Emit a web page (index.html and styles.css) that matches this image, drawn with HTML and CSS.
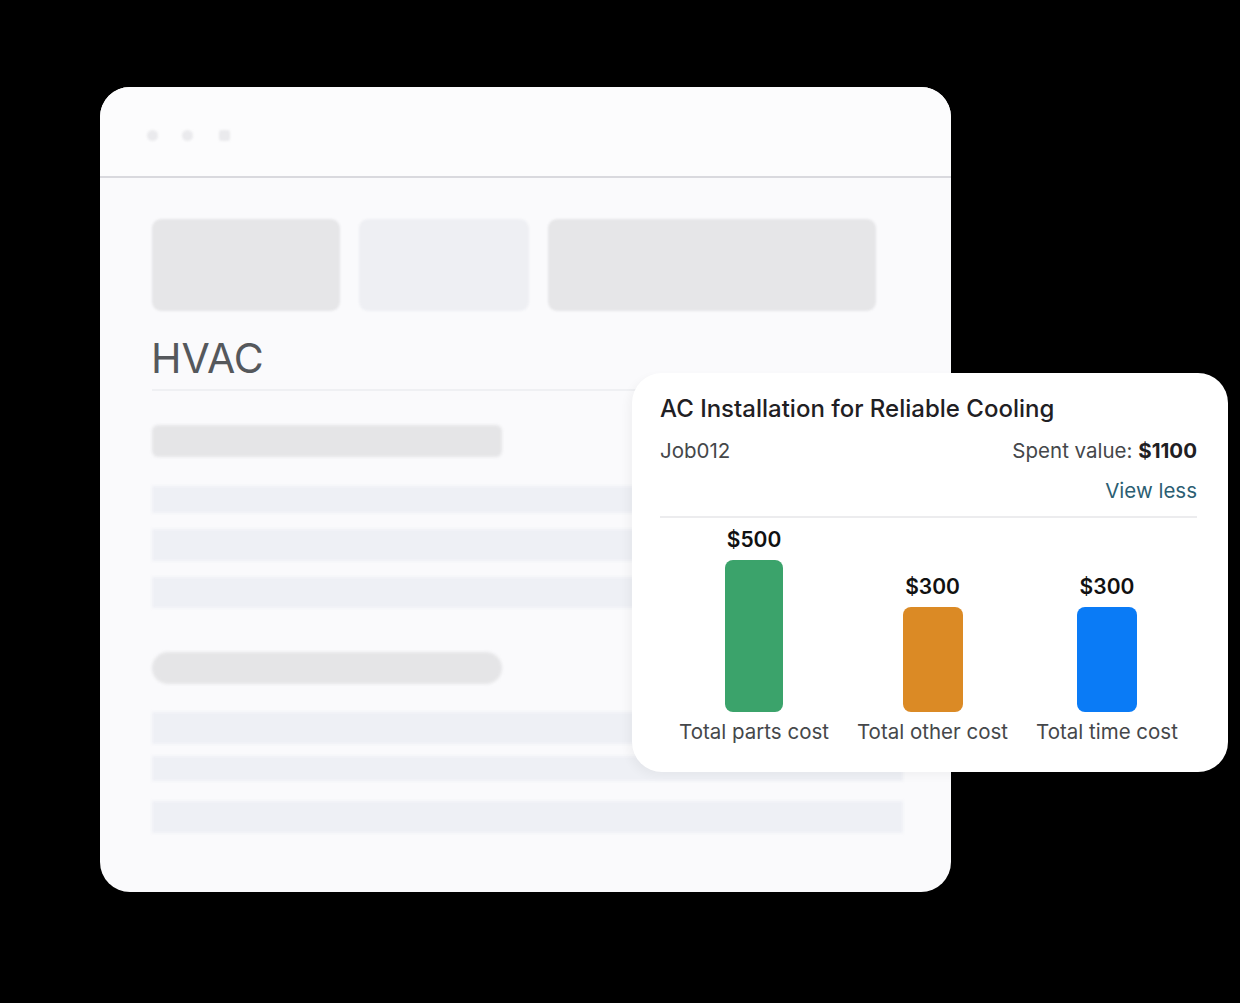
FILE: index.html
```html
<!DOCTYPE html>
<html>
<head>
<meta charset="utf-8">
<link rel="stylesheet" href="styles.css">
</head>
<body>
<div class="stage">
  <div class="window">
    <div class="win-head">
      <span class="dot"></span><span class="dot"></span><span class="dot"></span>
    </div>
    <div class="win-body">
      <div class="blocks">
        <div class="blk blk1"></div>
        <div class="blk blk2"></div>
        <div class="blk blk3"></div>
      </div>
      <h1 class="title">HVAC</h1>
      <div class="rule"></div>
      <div class="bar bar-a"></div>
      <div class="row r1"></div>
      <div class="row r2"></div>
      <div class="row r3"></div>
      <div class="bar bar-b"></div>
      <div class="row r4"></div>
      <div class="row r5"></div>
      <div class="row r6"></div>
    </div>
  </div>

  <div class="card">
    <div class="card-title">AC Installation for Reliable Cooling</div>
    <div class="card-meta">
      <span class="job">Job012</span>
      <span class="spent">Spent value: <b>$1100</b></span>
    </div>
    <div class="view-less">View less</div>
    <div class="divider"></div>
    <div class="chart">
      <div class="col">
        <div class="val">$500</div>
        <div class="cbar green"></div>
        <div class="lbl">Total parts cost</div>
      </div>
      <div class="col">
        <div class="val">$300</div>
        <div class="cbar orange"></div>
        <div class="lbl">Total other cost</div>
      </div>
      <div class="col">
        <div class="val">$300</div>
        <div class="cbar blue"></div>
        <div class="lbl">Total time cost</div>
      </div>
    </div>
  </div>
</div>
</body>
</html>
```

FILE: styles.css
```css
html, body {
  margin: 0;
  padding: 0;
  background: #000;
}
body {
  width: 1240px;
  height: 1003px;
  overflow: hidden;
  font-family: Inter, "Liberation Sans", sans-serif;
}
.stage {
  position: relative;
  width: 1240px;
  height: 1003px;
  padding-top: 87px;
  padding-left: 100px;
  box-sizing: border-box;
}
.window {
  width: 851px;
  height: 805px;
  background: #fafafc;
  border-radius: 30px;
  overflow: hidden;
}
.win-head {
  height: 91px;
  box-sizing: border-box;
  background: #fcfcfd;
  border-bottom: 2px solid #d9d9de;
  display: flex;
  align-items: center;
  gap: 24px;
  padding-left: 47px;
  padding-top: 8px;
}
.dot {
  width: 11px;
  height: 11px;
  border-radius: 50%;
  background: #eaeaed;
  filter: blur(1px);
}
.dot:last-child { border-radius: 3px; margin-left: 2px; }
.win-body {
  padding: 41px 0 0 52px;
}
.blocks {
  display: flex;
  gap: 19px;
}
.blk {
  height: 92px;
  border-radius: 9px;
  background: #e6e6e8;
  filter: blur(1px);
}
.blk1 { width: 188px; }
.blk2 { width: 170px; background: #eeeff3; }
.blk3 { width: 328px; }
.title {
  margin: 23px 0 0 -1px;
  font-size: 41px;
  line-height: 1.2;
  font-weight: 400;
  color: #55585c;
}
.rule {
  margin-top: 6px;
  width: 751px;
  height: 2px;
  background: #eff0f3;
}
.bar {
  width: 350px;
  height: 32px;
  background: #e5e5e7;
  filter: blur(1.5px);
}
.bar-a { margin-top: 34px; border-radius: 6px; }
.bar-b { margin-top: 44px; border-radius: 16px; }
.row {
  width: 751px;
  background: #eef0f5;
  filter: blur(1.5px);
}
.r1 { margin-top: 29px; height: 27px; }
.r2 { margin-top: 16px; height: 32px; }
.r3 { margin-top: 16px; height: 31px; }
.r4 { margin-top: 28px; height: 32px; }
.r5 { margin-top: 12px; height: 25px; }
.r6 { margin-top: 20px; height: 32px; }

.card {
  position: absolute;
  left: 632px;
  top: 373px;
  width: 596px;
  height: 399px;
  box-sizing: border-box;
  background: #fff;
  border-radius: 30px;
  padding: 22px 31px 0 28px;
  box-shadow: -4px 4px 10px rgba(0,0,0,0.04);
}
.card-title {
  font-size: 24px;
  line-height: 1.2;
  font-weight: 500;
  color: #1f2023;
}
.card-meta {
  margin-top: 15px;
  display: flex;
  justify-content: space-between;
  font-size: 20.5px;
  line-height: 1.2;
  color: #45474a;
}
.spent b {
  font-weight: 700;
  color: #1f2023;
}
.view-less {
  margin-top: 16px;
  text-align: right;
  font-size: 20.5px;
  line-height: 1.2;
  color: #2b5e72;
}
.divider {
  margin-top: 12px;
  height: 2px;
  background: #ececee;
}
.chart {
  margin-top: 9px;
  display: flex;
  justify-content: center;
  align-items: flex-end;
  gap: 28px;
}
.col {
  display: flex;
  flex-direction: column;
  align-items: center;
}
.val {
  font-size: 21px;
  line-height: 1.2;
  font-weight: 600;
  color: #111;
  margin-bottom: 8px;
}
.cbar {
  width: 60px;
  border-radius: 8px;
}
.green { width: 58px; height: 152px; background: #3ba36b; }
.orange { height: 105px; background: #db8a25; }
.blue { height: 105px; background: #0a7bf6; }
.lbl {
  margin-top: 8px;
  font-size: 20.5px;
  line-height: 1.2;
  color: #45474a;
  white-space: nowrap;
}
```
